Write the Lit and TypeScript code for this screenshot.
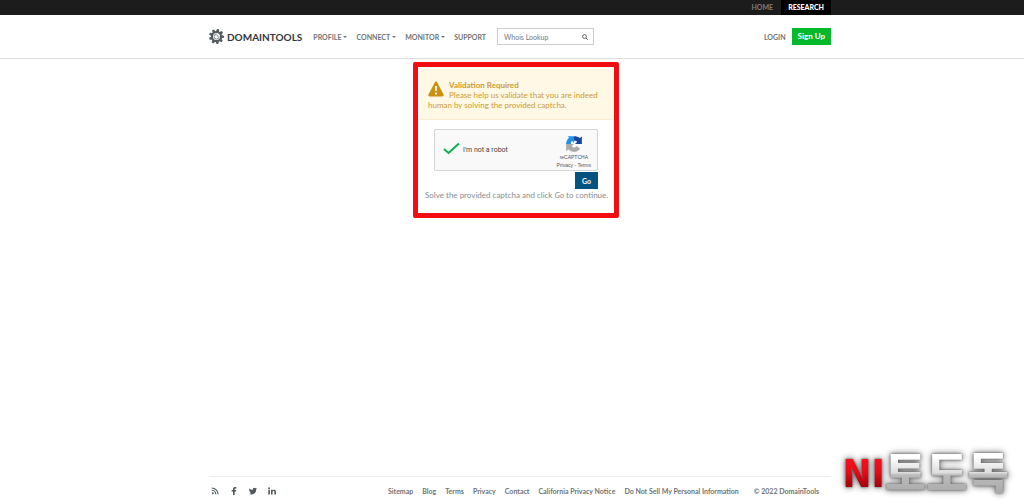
import { LitElement, html, css, svg } from "lit";
import { customElement } from "lit/decorators.js";

const footerLinks = [
  "Sitemap",
  "Blog",
  "Terms",
  "Privacy",
  "Contact",
  "California Privacy Notice",
  "Do Not Sell My Personal Information",
];

const gearTeeth = Array.from({ length: 9 }, (_, i) => i * 40);

@customElement("app-root")
export class AppRoot extends LitElement {
  static styles = css`
    :host {
      display: flex;
      flex-direction: column;
      min-height: 100vh;
      background: #fff;
      color: #6d7577;
      font-family: Lato, sans-serif;
      font-size: 8px;
      line-height: 10px;
    }
    * { box-sizing: border-box; }
    a { color: inherit; text-decoration: none; }
    button, input { font-family: inherit; margin: 0; }
    .shell { padding-left: 16px; }
    .inner {
      display: flex;
      align-items: center;
      width: 100%;
      max-width: 622px;
      margin: 0 auto;
    }
    .topbar { background: #1c1c1c; }
    .tabs { justify-content: flex-end; font-size: 7px; font-weight: 700; }
    .tab { padding: 0 8px; line-height: 15px; color: #7d7d7d; }
    .tab.active { padding: 0 7px; background: #000; color: #fff; font-weight: 900; }
    .header { border-bottom: 1px solid #ddd; }
    .header .inner { height: 43px; }
    .brand { display: flex; align-items: center; gap: 3px; color: #33383a; font-size: 10px; font-weight: 700; margin-right: 11px; }
    .brand svg { width: 15px; height: 15px; }
    .nav { display: flex; gap: 9px; font-size: 7px; font-weight: 700; }
    .menu { display: flex; align-items: center; gap: 2px; padding: 0; border: 0; background: none; color: inherit; font-size: 7px; font-weight: 700; line-height: 10px; }
    .menu::after { content: ""; border: 2px solid transparent; border-top-color: currentColor; border-bottom: 0; }
    .search { display: flex; align-items: center; width: 97px; height: 17px; margin-left: 11px; padding: 0 5px 0 6px; border: 1px solid #ccc; }
    .search input { width: 100%; min-width: 0; padding: 0; border: 0; outline: 0; background: none; color: #777; font-size: 7px; }
    .search input::placeholder { color: #777; opacity: 1; }
    .search button { display: flex; padding: 0; border: 0; background: none; color: #555; }
    .search svg { width: 6px; height: 6px; }
    .login { margin-left: auto; margin-right: 6px; font-size: 7px; font-weight: 700; }
    .signup { padding: 0 6px; background: #05b82c; color: #fff; font-size: 8px; font-weight: 700; line-height: 17px; }
    main { flex: 1; padding: 3px 0 0 8px; }
    .box { width: 206px; height: 156px; margin: 0 auto; padding: 2px 1px 0; border: 5px solid #f20d11; border-radius: 2px; }
    .notice { height: 51px; padding: 11px 8px 0 9px; background: #fff8e5; border-bottom: 1px solid #fbeed0; color: #cf9b32; }
    .notice svg { float: left; width: 16px; height: 16px; margin: 1px 5px 0 0; }
    .notice strong { display: block; font-weight: 700; }
    .notice p { margin: 0; }
    form { display: flex; flex-direction: column; padding: 9px 15px 0; }
    .captcha { display: flex; align-items: center; width: 100%; height: 42px; padding: 0 6px 0 8px; border: 1px solid #d5d5d5; border-radius: 1px; background: #f9f9f9; font-family: Roboto, sans-serif; }
    .robot { display: flex; align-items: center; gap: 3px; color: #444; font-size: 7px; }
    .tick { position: relative; display: flex; padding-bottom: 3px; }
    .tick input { position: absolute; inset: 0; width: 100%; height: 100%; opacity: 0; }
    .tick svg { width: 17px; height: 13px; }
    .recaptcha { margin-left: auto; padding-top: 3px; text-align: center; font-family: "Liberation Sans", sans-serif; font-size: 5px; line-height: 8px; color: #555; }
    .recaptcha svg { display: block; width: 18px; height: 18px; margin: 0 auto; }
    .go { align-self: flex-end; height: 17px; margin-top: 1px; padding: 0 7px; border: 0; background: #045280; color: #fff; font-size: 7px; font-weight: 700; }
    .hint { margin: 1px 0 0 -9px; white-space: nowrap; color: #858c8f; }
    .foot { height: 28px; justify-content: space-between; border-top: 1px solid #eee; }
    .social { display: flex; gap: 11px; color: #50585b; padding-left: 2px; }
    .social a { display: flex; }
    .social svg { width: 8px; height: 8px; }
    .links { display: flex; gap: 9px; margin-right: 12px; white-space: nowrap; font-size: 7px; font-weight: 700; }
    .copy { margin-left: 6px; }
    .watermark {
      position: fixed;
      right: 15px;
      bottom: 11px;
      display: flex;
      align-items: center;
      font-family: "Noto Sans CJK KR", sans-serif;
      font-size: 45px;
      font-weight: 900;
      line-height: 45px;
      filter: drop-shadow(0 0 1px #666) drop-shadow(0 0 3px #666);
    }
    .watermark span { background: linear-gradient(#fff 20%, #ddd 55%, #bbb 60%, #aaa); background-clip: text; -webkit-background-clip: text; color: transparent; }
    .watermark .red { background-image: linear-gradient(#f5101d 25%, #e20c18 55%, #a3000b 85%); font-size: 38px; }
  `;

  private social(name: string) {
    const shapes: Record<string, unknown> = {
      RSS: svg`<circle cx="3.5" cy="12.5" r="2" fill="currentColor"/><path d="M1.5 6.5a8 8 0 0 1 8 8M1.5 2a12.5 12.5 0 0 1 12.5 12.5" fill="none" stroke="currentColor" stroke-width="2.2"/>`,
      Facebook: svg`<path d="M6 16V9H3.3V6H6V4C6 1.4 7.500 0 10 0h2.700v3h-1.700C9.800 3 9.300 3.500 9.300 4.500V6h3.300l-.5 3H9.300v7z" fill="currentColor"/>`,
      Twitter: svg`<path d="M16 3.200c-.6.800-1 1.200-1.700 1.700C14.500 11 9.800 15 5 15c-1.900 0-3.500-.5-5-1.400 1.800.1 3.400-.3 4.700-1.400-1.500-.1-2.600-1-3-2.300h1.300C1.400 9.500.4 8.200.4 6.600l1.400.4C.4 5.900 0 4.200.9 2.600 2.600 4.700 4.800 5.900 7.700 6 7.200 3.500 8.900 1.500 11 1.500c1 0 1.800.4 2.500 1.100l2-.8-1.400 1.800z" fill="currentColor"/>`,
      LinkedIn: svg`<circle cx="2.200" cy="2.500" r="1.900" fill="currentColor"/><path d="M.6 5.700h3.200V15H.6zM6 5.700h3v1.400c1.300-2.300 7-2.400 7 2.500V15h-3.200v-4.800c0-2.700-3.600-2.500-3.600 0V15H6z" fill="currentColor"/>`,
    };
    return html`<a href="#" aria-label=${name}><svg viewBox="0 0 16 16">${shapes[name]}</svg></a>`;
  }

  render() {
    return html`
      <div class="topbar shell">
        <nav class="inner tabs"><a class="tab" href="#">HOME</a><a class="tab active" href="#">RESEARCH</a></nav>
      </div>
      <header class="header shell">
        <div class="inner">
          <a class="brand" href="#">
            <svg viewBox="0 0 30 30" aria-hidden="true">
              ${gearTeeth.map((a) => svg`<path d="M13 0h4l1.500 6h-7z" fill="#555c5e" transform="rotate(${a + 12} 15 15)"/>`)}
              <circle cx="15" cy="15" r="9" fill="#fff" stroke="#555c5e" stroke-width="4"/>
              <path d="M15 10a5 5 0 1 0 5 5M13 13c3-3 6 0 4 3" fill="none" stroke="#8b9295" stroke-width="2"/>
            </svg>
            <span>DOMAINTOOLS</span>
          </a>
          <nav class="nav">
            <button class="menu">PROFILE</button>
            <button class="menu">CONNECT</button>
            <button class="menu">MONITOR</button>
            <a href="#">SUPPORT</a>
          </nav>
          <div class="search">
            <input type="text" placeholder="Whois Lookup" aria-label="Whois Lookup" />
            <button aria-label="Search"><svg viewBox="0 0 12 12"><circle cx="5" cy="5" r="3.800" fill="none" stroke="currentColor" stroke-width="1.800"/><path d="m8 8 3.500 3.500" stroke="currentColor" stroke-width="2"/></svg></button>
          </div>
          <a class="login" href="#">LOGIN</a>
          <a class="signup" href="#">Sign Up</a>
        </div>
      </header>
      <main>
        <section class="box">
          <div class="notice">
            <svg viewBox="0 0 32 32" aria-hidden="true"><path d="M14 2q2-3 4 0l13 25q1 4-3 4H4q-4 0-3-4z" fill="#c9900f"/><path d="M13.800 10h4.400l-.6 10h-3.200zM14 23h4v4h-4z" fill="#fff8e5"/></svg>
            <strong>Validation Required</strong>
            <p>Please help us validate that you are indeed human by solving the provided captcha.</p>
          </div>
          <form @submit=${(e: Event) => e.preventDefault()}>
            <div class="captcha">
              <label class="robot">
                <span class="tick"><input type="checkbox" checked /><svg viewBox="0 0 34 26"><path d="M2 14 11 22 32 3" fill="none" stroke="#0cb050" stroke-width="4"/></svg></span>
                I'm not a robot
              </label>
              <div class="recaptcha">
                <svg viewBox="0 0 64 64" aria-hidden="true">
                  <path d="M60 32V5l-7 6C47 6 40 4 32 4v17c6-1 9 1 11 4l-8 7z" fill="#17479f"/>
                  <path d="M32 4H9l6 6C7 16 4 24 4 32h17c-1-6 1-9 4-11l7 7z" fill="#2090ee"/>
                  <path d="M4 32v27l7-8c6 6 13 9 21 9 9 0 17-4 22-11L42 39c-5 7-14 7-18 0l8-7z" fill="#ababab"/>
                </svg>
                <div>reCAPTCHA</div>
                <div><a href="#">Privacy</a> - <a href="#">Terms</a></div>
              </div>
            </div>
            <button class="go">Go</button>
            <p class="hint">Solve the provided captcha and click <em>Go</em> to continue.</p>
          </form>
        </section>
      </main>
      <footer class="shell">
        <div class="inner foot">
          <div class="social">${["RSS", "Facebook", "Twitter", "LinkedIn"].map((n) => this.social(n))}</div>
          <div class="links">${footerLinks.map((t) => html`<a href="#">${t}</a>`)}<span class="copy">© 2022 DomainTools</span></div>
        </div>
      </footer>
      <div class="watermark"><span class="red">NI</span><span>토도독</span></div>
    `;
  }
}
